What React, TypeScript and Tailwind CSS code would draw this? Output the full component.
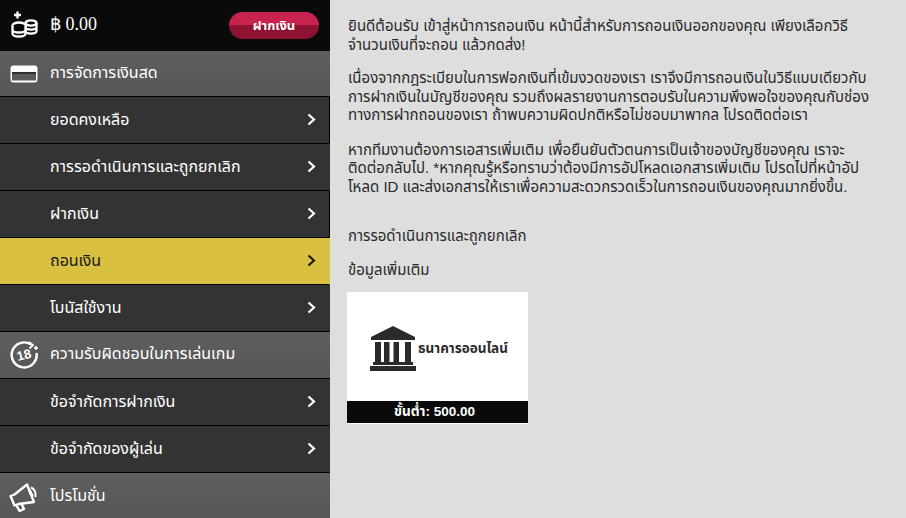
const font = "font-['Liberation_Sans','Noto_Sans','Noto_Sans_Thai',sans-serif]";

function Coins() {
  return (
    <svg viewBox="0 0 28 28" className="-mt-[2px] h-[28px] w-[28px]" fill="none" stroke="#fff" strokeWidth="2.300">
      <path d="M7.500 0.500v7M4 4h7" strokeWidth="2.400" />
      <ellipse cx="21" cy="12" rx="5.500" ry="2.600" />
      <path d="M15.500 12v8c0 1.500 2.500 2.600 5.500 2.600s5.500-1.100 5.500-2.600v-8M15.500 16c0 1.500 2.500 2.600 5.500 2.600s5.500-1.100 5.500-2.600" />
      <ellipse cx="9" cy="14.500" rx="6.500" ry="3" fill="#0a0a0a" />
      <path d="M2.500 14.500v8c0 1.800 3 3 6.500 3s6.500-1.200 6.500-3v-8M2.500 18.500c0 1.800 3 3 6.500 3s6.500-1.200 6.500-3" fill="#0a0a0a" />
    </svg>
  );
}

function Card() {
  return (
    <svg viewBox="0 0 28 18" className="h-[18px] w-[28px]" fill="none">
      <rect x="0.500" y="0.500" width="27" height="17" rx="3" fill="#fff" />
      <rect x="2" y="7" width="24" height="2" fill="#2e2e2e" />
      <rect x="2" y="9" width="24" height="6.500" fill="#5c5c5c" />
    </svg>
  );
}

function Age() {
  return (
    <svg viewBox="0 0 30 30" className="h-[30px] w-[30px]" fill="none">
      <path d="M22 4.500A12.500 12.500 0 1 0 27.500 13" stroke="#fff" strokeWidth="2.400" />
      <path d="M20 2l4 3-3.500 3.500" stroke="#fff" strokeWidth="1.800" />
      <path d="M27 6v4M25 8h4" stroke="#fff" strokeWidth="1.400" />
      <text x="15" y="19.500" textAnchor="middle" fontFamily="Liberation Sans" fontWeight="700" fontSize="13" fill="#fff" transform="rotate(-14 15 15)">
        18
      </text>
    </svg>
  );
}

function Megaphone() {
  return (
    <svg viewBox="0 0 30 30" className="h-[30px] w-[30px]" fill="none" stroke="#fff" strokeWidth="2.400" strokeLinejoin="round">
      <path d="M1.500 14l4 9.500 4-1.500 15.500-2L18 2.500 5.500 12.500z" />
      <path d="M7 22.500l3.500 6.500 4.500-2-3-6" />
      <path d="M20.500 8.500l3 6" strokeWidth="2.800" />
      <path d="M22 5.500c3.500 1.500 5 5 4.500 9.500" strokeWidth="2" />
    </svg>
  );
}

function Bank() {
  return (
    <svg viewBox="0 0 48 45" className="h-[45px] w-[48px]" fill="#2b2b2b">
      <path d="M24 0L46 11v3H2v-3z" />
      <rect x="6" y="16" width="6" height="20" />
      <rect x="15" y="16" width="5.500" height="20" />
      <rect x="24.500" y="16" width="5.500" height="20" />
      <rect x="36" y="16" width="6" height="20" />
      <rect x="4" y="36" width="40" height="3" />
      <rect x="1" y="40" width="46" height="5" />
    </svg>
  );
}

function Chevron() {
  return (
    <svg viewBox="0 0 9 13" className="h-[13px] w-[9px]" fill="none" stroke="currentColor" strokeWidth="2.200">
      <path d="M1.500 1.500L7 6.500l-5.500 5" />
    </svg>
  );
}

function Section({ icon, label, first }: { icon: React.ReactNode; label: string; first?: boolean }) {
  return (
    <div
      className={
        first
          ? "flex h-[46px] items-center border-b border-black bg-gradient-to-b from-[#5e5e5e] to-[#565656] text-white"
          : "flex h-[47px] items-center border-b border-black bg-gradient-to-b from-[#5e5e5e] to-[#565656] text-white last:border-b-0"
      }
    >
      <div className="flex w-[50px] shrink-0 items-center justify-center pr-[2px]">{icon}</div>
      <span className="-mt-[2px] text-[16px]">{label}</span>
    </div>
  );
}

function Row({ label, active, edge }: { label: string; active?: boolean; edge?: boolean }) {
  let tone = "border-r-transparent bg-[#333333] text-white";
  if (active) tone = "border-r-transparent bg-[#d9c040] text-[#1a1a1a]";
  if (edge) tone = "border-r-black bg-[#333333] text-white";
  return (
    <div className={`flex h-[47px] items-center justify-between border-r border-b border-b-black pl-[50px] pr-[13px] ${tone}`}>
      <span className="-mt-[1px] text-[16px]">{label}</span>
      <span className="-mt-[2px]">
        <Chevron />
      </span>
    </div>
  );
}

export default function App() {
  return (
    <div className={`flex h-[518px] w-[906px] overflow-hidden bg-[#dedede] ${font}`}>
      <aside className="w-[330px] shrink-0 overflow-hidden">
        <div className="flex h-[51px] items-center bg-[#0a0a0a] pr-[11px] text-white">
          <div className="flex w-[50px] shrink-0 items-center justify-center pr-[2px]">
            <Coins />
          </div>
          <span className="-mt-[2px] font-['Liberation_Serif',serif] text-[18px]">฿ 0.00</span>
          <button className="ml-auto h-[27px] w-[90px] rounded-full bg-gradient-to-b from-[#c8234f] from-50% to-[#8e1231] to-50% text-[13px] font-bold text-white">
            ฝากเงิน
          </button>
        </div>
        <Section first icon={<Card />} label="การจัดการเงินสด" />
        <Row edge label="ยอดคงเหลือ" />
        <Row label="การรอดำเนินการและถูกยกเลิก" />
        <Row edge label="ฝากเงิน" />
        <Row active label="ถอนเงิน" />
        <Row label="โบนัสใช้งาน" />
        <Section icon={<Age />} label="ความรับผิดชอบในการเล่นเกม" />
        <Row label="ข้อจำกัดการฝากเงิน" />
        <Row label="ข้อจำกัดของผู้เล่น" />
        <Section icon={<Megaphone />} label="โปรโมชั่น" />
      </aside>
      <main className="min-w-0 flex-1 whitespace-nowrap pl-[18px] pt-[17px] text-[15px] leading-[18.500px] text-[#2a2a2a]">
        <p>
          ยินดีต้อนรับ เข้าสู่หน้าการถอนเงิน หน้านี้สำหรับการถอนเงินออกของคุณ เพียงเลือกวิธี
          <br />
          จำนวนเงินที่จะถอน แล้วกดส่ง!
        </p>
        <p className="mt-[15px]">
          เนื่องจากกฎระเบียบในการฟอกเงินที่เข้มงวดของเรา เราจึงมีการถอนเงินในวิธีแบบเดียวกับ
          <br />
          การฝากเงินในบัญชีของคุณ รวมถึงผลรายงานการตอบรับในความพึงพอใจของคุณกับช่อง
          <br />
          ทางการฝากถอนของเรา ถ้าพบความผิดปกติหรือไม่ชอบมาพากล โปรดติดต่อเรา
        </p>
        <p className="mt-[16px]">
          หากทีมงานต้องการเอสารเพิ่มเติม เพื่อยืนยันตัวตนการเป็นเจ้าของบัญชีของคุณ เราจะ
          <br />
          ติดต่อกลับไป. *หากคุณรู้หรือทราบว่าต้องมีการอัปโหลดเอกสารเพิ่มเติม โปรดไปที่หน้าอัป
          <br />
          โหลด ID และส่งเอกสารให้เราเพื่อความสะดวกรวดเร็วในการถอนเงินของคุณมากยิ่งขึ้น.
        </p>
        <p className="mt-[31px]">การรอดำเนินการและถูกยกเลิก</p>
        <p className="mt-[15px]">ข้อมูลเพิ่มเติม</p>
        <div className="-ml-px mt-[13px] flex h-[132px] w-[181px] flex-col bg-white">
          <div className="flex flex-1 items-center gap-[1px] pl-[22px] pt-[4px]">
            <Bank />
            <span className="text-[13.500px] font-bold leading-none text-[#2b2b2b]">ธนาคารออนไลน์</span>
          </div>
          <div className="mb-px flex h-[22px] items-center justify-center bg-[#0a0a0a] pr-[6px] text-[13.500px] font-bold text-white">
            ขั้นต่ำ: 500.00
          </div>
        </div>
      </main>
    </div>
  );
}
